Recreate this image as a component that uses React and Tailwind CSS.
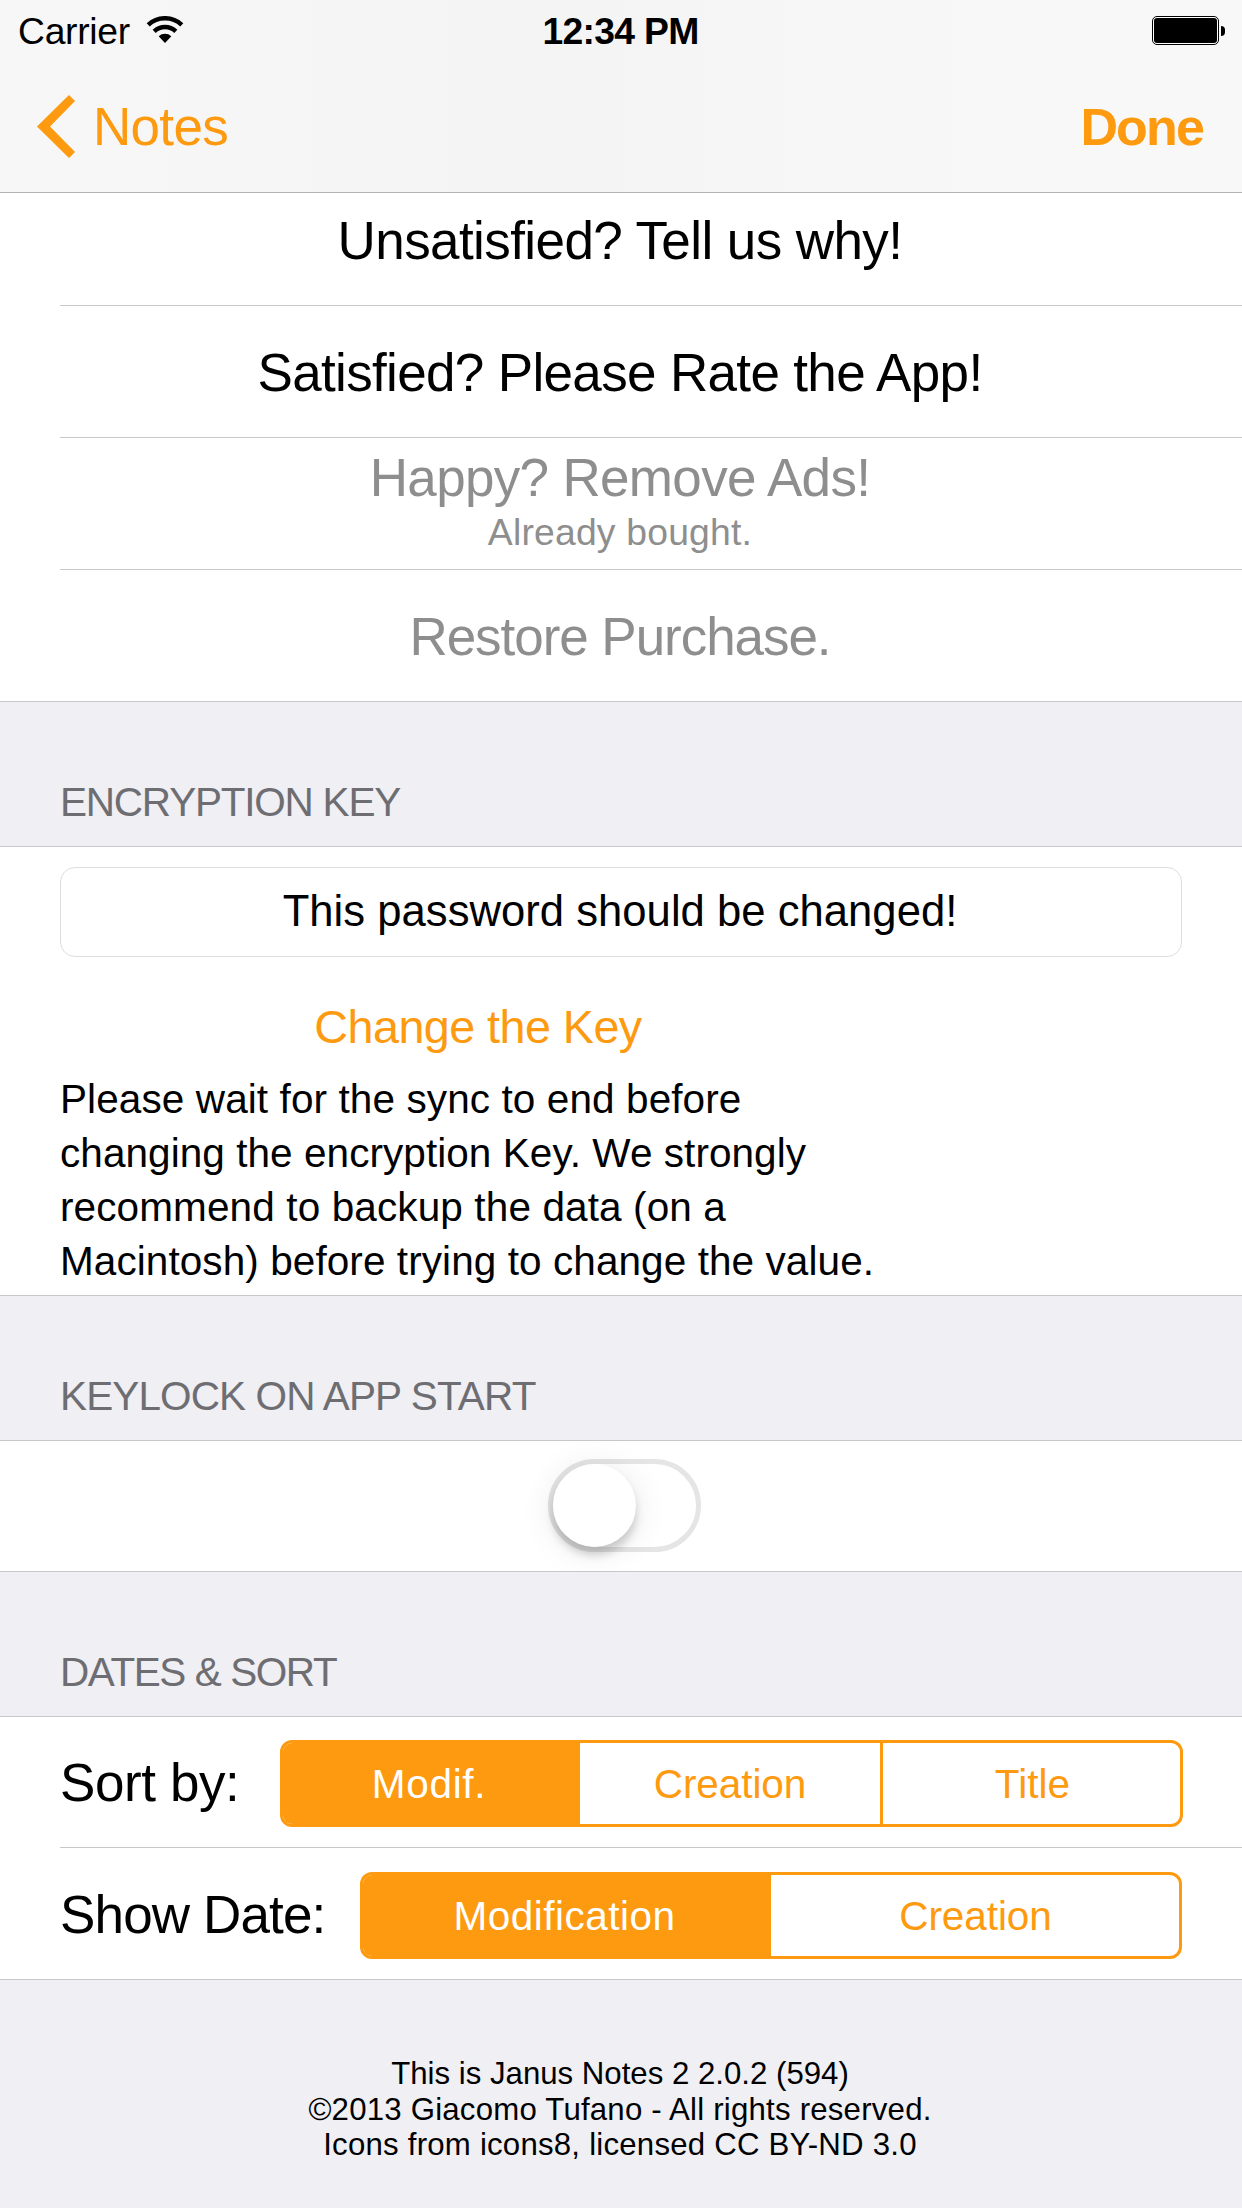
function WifiIcon() {
  return (
    <svg width="38" height="28" viewBox="0 0 38 28" fill="none" className="mt-[6px] ml-[16px] shrink-0">
      <path d="M2.2 8.8A24.8 24.8 0 0 1 35.8 8.8" stroke="#000" strokeWidth="4.5" />
      <path d="M8.2 15.3A15.9 15.9 0 0 1 29.8 15.3" stroke="#000" strokeWidth="4.5" />
      <path d="M19 27L12.7 20.2A9.2 9.2 0 0 1 25.3 20.2Z" fill="#000" />
    </svg>
  );
}

function BatteryIcon() {
  return (
    <div className="mt-[6px] flex h-[29px] items-center gap-[2px]">
      <div className="h-[29px] w-[67px] rounded-[5px] border border-black bg-white p-px">
        <div className="h-full rounded-[3px] bg-black" />
      </div>
      <div className="h-[10px] w-[4px] rounded-r-full bg-black" />
    </div>
  );
}

function NavBar() {
  return (
    <header className="h-[193px] border-b border-[#b2b2b2] bg-linear-to-r from-[#f7f7f7] via-[#f4f4f4] via-45% to-[#f8f8f8] to-80%">
      <div className="flex h-[96px] pt-[10px] text-[37.3px] leading-[42px]">
        <div className="flex flex-1 pl-[18px]">
          <span className="tracking-[-0.3px]">Carrier</span>
          <WifiIcon />
        </div>
        <div className="-translate-x-px font-bold tracking-[-0.7px]">12:34 PM</div>
        <div className="flex flex-1 justify-end pr-[17px]">
          <BatteryIcon />
        </div>
      </div>
      <div className="flex justify-between pr-[39px] pl-[37px] text-[53px] leading-[60px] text-[#fd9a0f]">
        <button className="flex items-start tracking-[-0.7px]">
          <svg width="38" height="63" viewBox="0 0 38 63" className="-mt-px mr-[18px]">
            <path d="M32 0L38 6L13 31.5L38 57L32 63L0 31.5Z" fill="#fd9a0f" />
          </svg>
          <span className="pt-px">Notes</span>
        </button>
        <button className="text-[52px] font-bold tracking-[-1.85px]">Done</button>
      </div>
    </header>
  );
}

function SectionHeader({ children, className }) {
  return (
    <div className={"flex h-[144px] items-end pb-5 pl-[60px] text-[40.5px] leading-[48px] whitespace-nowrap text-[#6d6d72] " + className}>
      {children}
    </div>
  );
}

function Group({ children }) {
  return <section className="border-y border-[#c8c7cc] bg-white">{children}</section>;
}

function Divider() {
  return <div className="ml-[60px] h-px bg-[#c8c7cc]" />;
}

export default function App() {
  return (
    <div className="h-[2208px] w-[1242px] overflow-hidden bg-[#efeff4] font-['Liberation_Sans',Arial,sans-serif] whitespace-nowrap text-black">
      <NavBar />

      <section className="border-b border-[#c8c7cc] bg-white text-center text-[53px]">
        <div className="h-[112px] pt-[18px] pr-[2px] leading-[60px] tracking-[-0.58px]">Unsatisfied? Tell us why!</div>
        <Divider />
        <div className="h-[131px] pr-[2px] leading-[133px] tracking-[-0.66px]">Satisfied? Please Rate the App!</div>
        <Divider />
        <div className="h-[131px] pt-[9px] pr-[2px] text-[#8e8e8e]">
          <div className="leading-[62px] tracking-[-0.67px]">Happy? Remove Ads!</div>
          <div className="text-[37.3px] leading-[46px] tracking-[0.2px]">Already bought.</div>
        </div>
        <Divider />
        <div className="h-[131px] pr-[2px] leading-[133px] tracking-[-1.05px] text-[#8e8e8e]">Restore Purchase.</div>
      </section>

      <SectionHeader className="tracking-[-1.22px]">ENCRYPTION KEY</SectionHeader>
      <Group>
        <div className="h-[448px] pt-[20px] pl-[60px]">
          <div className="flex h-[90px] w-[1122px] items-center justify-center rounded-[15px] border border-[#dedede] pr-[2px] pb-[2px] text-[43.6px] leading-[52px] tracking-[0.03px]">
            This password should be changed!
          </div>
          <button className="mt-[42px] block w-[836px] pt-px text-center text-[46.7px] leading-[54px] tracking-[-0.54px] text-[#fd9a0f]">
            Change the Key
          </button>
          <p className="pt-[18px] text-[40.5px] leading-[54px]">
            <span className="block tracking-[0.1px]">Please wait for the sync to end before</span>
            <span className="block tracking-[0.06px]">changing the encryption Key. We strongly</span>
            <span className="block tracking-[0.12px]">recommend to backup the data (on a</span>
            <span className="block tracking-[0.08px]">Macintosh) before trying to change the value.</span>
          </p>
        </div>
      </Group>

      <SectionHeader className="tracking-[-0.87px]">KEYLOCK ON APP START</SectionHeader>
      <Group>
        <div className="h-[130px] overflow-hidden pt-[18px] pl-[548px]">
          <div className="h-[93px] w-[153px] rounded-full border-[5px] border-[#e5e5e5] bg-white">
            <div className="size-[83px] rounded-full bg-white shadow-[0_8px_9px_rgba(0,0,0,0.17),0_4px_34px_rgba(0,0,0,0.1)]" />
          </div>
        </div>
      </Group>

      <SectionHeader className="tracking-[-1.42px]">DATES &amp; SORT</SectionHeader>
      <Group>
        <div className="flex h-[130px] justify-between pr-[59px] pl-[60px] text-[53px] leading-[132px]">
          <div className="tracking-[-0.4px]">Sort by:</div>
          <div className="mt-[23px] flex h-[87px] w-[903px] overflow-hidden rounded-[12px] border-[3px] border-[#fd9a0f] text-center text-[40.5px] leading-[82px] text-[#fd9a0f]">
            <div className="w-[297px] bg-[#fd9a0f] pr-[5px] tracking-[0.7px] text-white">Modif.</div>
            <div className="w-[303px] border-r-[3px] border-[#fd9a0f] tracking-[-0.08px]">Creation</div>
            <div className="w-[297px] pl-[2px] tracking-[0.05px]">Title</div>
          </div>
        </div>
        <Divider />
        <div className="flex h-[131px] justify-between pr-[60px] pl-[60px] text-[53px] leading-[133px]">
          <div className="tracking-[-0.85px]">Show Date:</div>
          <div className="mt-[24px] flex h-[87px] w-[822px] overflow-hidden rounded-[12px] border-[3px] border-[#fd9a0f] text-center text-[40.5px] leading-[82px] text-[#fd9a0f]">
            <div className="w-[408px] bg-[#fd9a0f] pr-[5px] tracking-[0.5px] text-white">Modification</div>
            <div className="w-[408px] pl-px tracking-[-0.08px]">Creation</div>
          </div>
        </div>
      </Group>

      <footer className="pt-[76px] pr-[2px] text-center text-[31.2px] leading-[35.5px]">
        <div>This is Janus Notes 2 2.0.2 (594)</div>
        <div className="tracking-[0.21px]">©2013 Giacomo Tufano - All rights reserved.</div>
        <div className="tracking-[0.22px]">Icons from icons8, licensed CC BY-ND 3.0</div>
      </footer>
    </div>
  );
}
